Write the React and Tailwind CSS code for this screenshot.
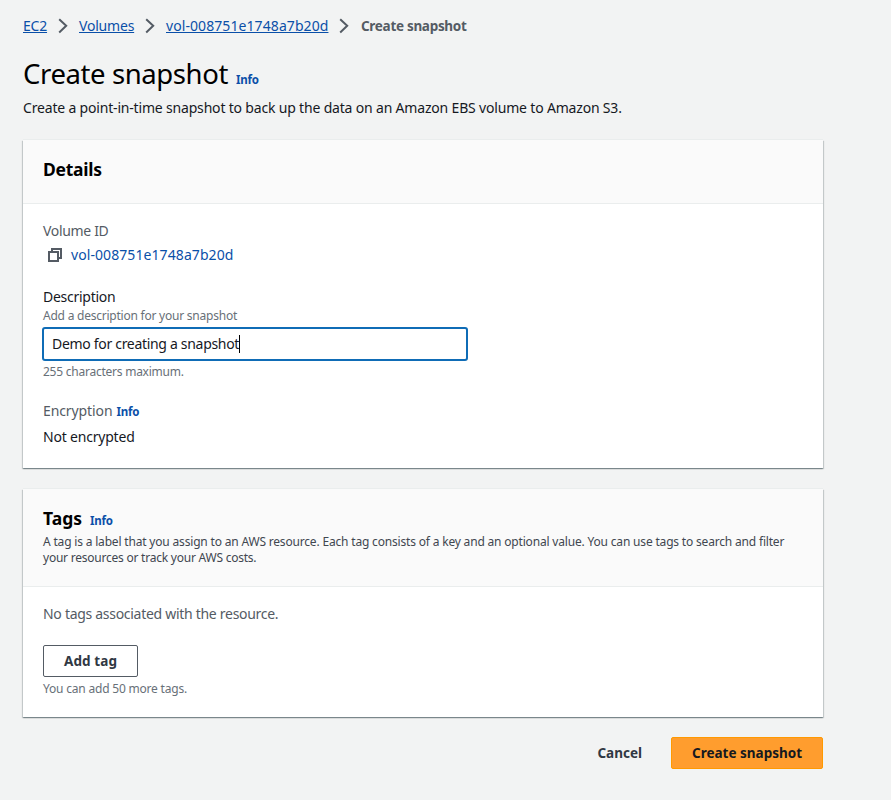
function Chevron({ className = "" }) {
  return (
    <svg width="10" height="16" viewBox="0 0 10 16" fill="none" className={`shrink-0 ${className}`}>
      <path d="M1.2 1.2L8.2 7.8L1.2 14.4" stroke="#545b64" strokeWidth="2" />
    </svg>
  );
}

function CopyIcon() {
  return (
    <svg width="14" height="14" viewBox="0 0 14 14" fill="none" stroke="#545b64" strokeWidth="2" className="shrink-0">
      <path d="M1 4h9v9H1z" />
      <path d="M4 4V1h9v9h-3" />
    </svg>
  );
}

function Info({ className = "" }) {
  return <a className={`text-[11.5px] font-bold tracking-[-0.2px] text-[#0a4fa8] ${className}`}>Info</a>;
}

const card =
  "w-[800px] bg-white shadow-[0_1px_1px_0_rgba(0,28,36,0.3),1px_1px_1px_0_rgba(0,28,36,0.15),-1px_1px_1px_0_rgba(0,28,36,0.15),0_-1px_0_0_#eaeded]";

export default function App() {
  return (
    <div className="h-[800px] w-full overflow-hidden bg-[#f2f3f3] pl-[23px] pt-4 font-['Noto_Sans',sans-serif] text-[14px] leading-5 text-[#16191f]">
      <nav className="flex h-5 items-center whitespace-nowrap text-[#0a4fa8]">
        <a className="w-[24px] tracking-[-0.2px] underline underline-offset-1">EC2</a>
        <Chevron className="ml-[11px] mr-[11px]" />
        <a className="w-[55px] tracking-[-0.2px] underline underline-offset-1">Volumes</a>
        <Chevron className="ml-[11px] mr-[11px]" />
        <a className="w-[163px] tracking-[0.08px] underline underline-offset-1">vol-008751e1748a7b20d</a>
        <Chevron className="ml-[10px] mr-[12px]" />
        <span className="text-[13.5px] font-bold tracking-[-0.3px] text-[#545b64]">Create snapshot</span>
      </nav>

      <div className="mt-5 flex h-9 items-baseline whitespace-nowrap">
        <h1 className="w-[205px] text-[27.5px] leading-9 tracking-[-0.4px] text-black">Create snapshot</h1>
        <Info className="ml-2" />
      </div>
      <p className="mt-[6px] whitespace-nowrap tracking-[-0.18px]">
        Create a point-in-time snapshot to back up the data on an Amazon EBS volume to Amazon S3.
      </p>

      <section className={`mt-[22px] h-[328px] ${card}`}>
        <header className="h-16 border-b border-[#eaeded] bg-[#fafafa] px-5 pt-[18px]">
          <h2 className="text-[17.5px] font-bold leading-[22px] tracking-[-0.25px] text-black">Details</h2>
        </header>
        <div className="px-5 pt-[17px]">
          <div className="tracking-[-0.33px] text-[#545b64]">Volume ID</div>
          <div className="mt-1 flex items-center pl-[5px]">
            <CopyIcon />
            <a className="ml-[9px] tracking-[0.08px] text-[#0a4fa8]">vol-008751e1748a7b20d</a>
          </div>
          <label className="mt-[22px] block tracking-[-0.27px]">Description</label>
          <div className="mt-px text-[12px] leading-4 tracking-[-0.23px] text-[#687078]">Add a description for your snapshot</div>
          <div className="-ml-px mt-[3px] flex h-[34px] w-[426px] items-center rounded-[3px] border-2 border-[#0f6cb6] bg-white pl-2">
            <span className="tracking-[-0.31px]">Demo for creating a snapshot</span>
            <span className="h-[18px] w-px bg-black" />
          </div>
          <div className="mt-[3px] text-[12px] leading-4 tracking-[-0.24px] text-[#687078]">255 characters maximum.</div>
          <div className="mt-[21px] flex h-5 items-baseline">
            <span className="tracking-[-0.1px] text-[#545b64]">Encryption</span>
            <Info className="ml-1" />
          </div>
          <div className="mt-[6px] tracking-[-0.2px]">Not encrypted</div>
        </div>
      </section>

      <section className={`mt-[21px] h-[228px] ${card}`}>
        <header className="h-[98px] border-b border-[#eaeded] bg-[#fafafa] px-5 pt-[18px]">
          <div className="flex h-[22px] items-baseline">
            <h2 className="text-[17.5px] font-bold leading-[22px] text-black">Tags</h2>
            <Info className="ml-2" />
          </div>
          <p className="mt-[5px] whitespace-nowrap text-[12px] leading-4 tracking-[-0.18px] text-[#414750]">
            <span className="block">A tag is a label that you assign to an AWS resource. Each tag consists of a key and an optional value. You can use tags to search and filter</span>
            <span className="block tracking-[-0.23px]">your resources or track your AWS costs.</span>
          </p>
        </header>
        <div className="px-5 pt-[17px]">
          <div className="tracking-[-0.29px] text-[#545b64]">No tags associated with the resource.</div>
          <button className="mt-[21px] flex h-8 w-[95px] items-center justify-center rounded-[2px] border border-[#545b64] bg-white text-[13.5px] font-bold tracking-[0.1px] text-[#303843]">
            Add tag
          </button>
          <div className="mt-1 text-[12px] leading-4 tracking-[-0.2px] text-[#687078]">You can add 50 more tags.</div>
        </div>
      </section>

      <footer className="mt-5 flex h-8 w-[800px] items-center justify-end text-[13.5px] font-bold">
        <button className="mr-[29px] text-[#303843]">Cancel</button>
        <button className="h-8 w-[152px] rounded-[2px] border border-[#ff9900] bg-[#ff9d2e] text-[#16191f]">Create snapshot</button>
      </footer>
    </div>
  );
}
